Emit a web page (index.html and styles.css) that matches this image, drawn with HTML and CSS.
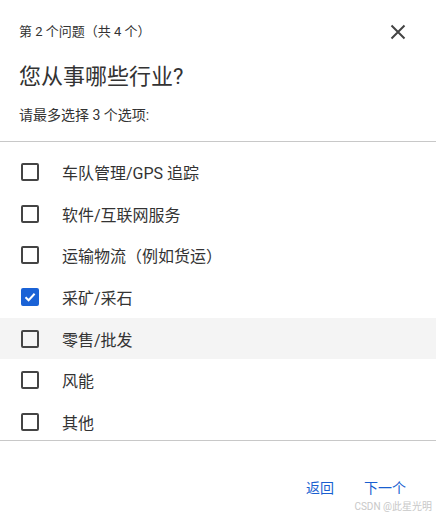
FILE: index.html
```html
<!DOCTYPE html>
<html>
	<head>
		<meta charset="utf-8">
		<title>问卷</title>
		<link rel="stylesheet" href="styles.css">
	</head>
	<body>
		<div class="dialog">
			<div class="head">
				<span class="step">第 2 个问题（共 4 个）</span>
				<span class="close">
					<svg width="16" height="16" viewBox="0 0 16 16"><path d="M1.5 1.5 L14.5 14.5 M14.5 1.5 L1.5 14.5" stroke="#444" stroke-width="2" fill="none"/></svg>
				</span>
			</div>
			<div class="title">您从事哪些行业?</div>
			<div class="hint">请最多选择 3 个选项:</div>

			<div class="list">
				<div class="row"><span class="box"></span><span class="label">车队管理/GPS 追踪</span></div>
				<div class="row"><span class="box"></span><span class="label">软件/互联网服务</span></div>
				<div class="row"><span class="box"></span><span class="label">运输物流（例如货运）</span></div>
				<div class="row"><span class="box checked"><svg width="14" height="14" viewBox="0 0 14 14"><path d="M2.5 7.2 L5.6 10.2 L11.6 3.8" stroke="#fff" stroke-width="2" fill="none"/></svg></span><span class="label">采矿/采石</span></div>
				<div class="row hover"><span class="box"></span><span class="label">零售/批发</span></div>
				<div class="row"><span class="box"></span><span class="label">风能</span></div>
				<div class="row"><span class="box"></span><span class="label">其他</span></div>
			</div>

			<div class="foot">
				<span class="btn">返回</span>
				<span class="btn">下一个</span>
			</div>
			<div class="mark">CSDN @此星光明</div>
		</div>
	</body>
</html>
```

FILE: styles.css
```css
body {
	margin: 0;
	background: #fff;
	font-family: Roboto, "Noto Sans CJK SC", sans-serif;
	color: #333;
}

.dialog {
	width: 436px;
	height: 519px;
	position: relative;
	display: flex;
	flex-direction: column;
}

.head {
	display: flex;
	justify-content: space-between;
	align-items: center;
	padding: 22px 30px 0 19px;
	height: 20px;
}

.step {
	font-size: 13px;
	line-height: 20px;
}

.close {
	display: flex;
	margin-top: -1px;
}

.title {
	margin: 21px 0 0 19px;
	font-size: 22px;
	line-height: 28px;
}

.hint {
	margin: 14px 0 0 19px;
	font-size: 14px;
	line-height: 20px;
}

.list {
	margin-top: 16px;
	border-top: 1px solid #c8c8c8;
	border-bottom: 1px solid #c8c8c8;
	height: 289px;
	padding-top: 9px;
	overflow: hidden;
}

.row {
	display: flex;
	align-items: center;
	height: 41.7px;
	padding-left: 21px;
}

.row.hover {
	background: #f4f4f4;
}

.box {
	width: 14px;
	height: 14px;
	border: 2px solid #444;
	border-radius: 2px;
	display: flex;
	align-items: center;
	justify-content: center;
}

.box.checked {
	background: #1a62d6;
	border-color: #1a62d6;
}

.label {
	margin-left: 23px;
	font-size: 16px;
}

.foot {
	display: flex;
	justify-content: flex-end;
	gap: 30px;
	padding: 37px 30px 0 0;
}

.btn {
	color: #1a5fd0;
	font-size: 14px;
	line-height: 20px;
}

.mark {
	position: absolute;
	right: 4px;
	bottom: 6px;
	font-size: 10px;
	color: #c8c8c8;
}
```
